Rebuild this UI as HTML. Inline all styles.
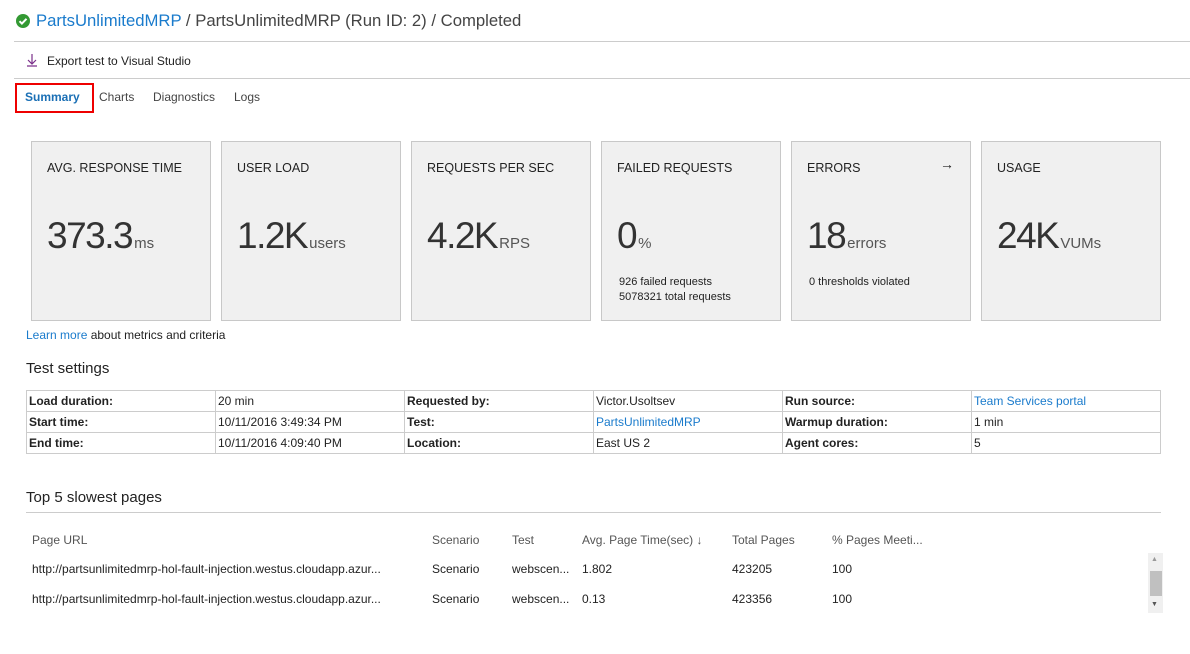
<!DOCTYPE html>
<html><head><meta charset="utf-8"><style>
*{box-sizing:border-box;margin:0;padding:0}
body{width:1190px;height:654px;background:#fff;font-family:"Liberation Sans",sans-serif;color:#222;position:relative;overflow:hidden;font-size:12px}
.a{position:absolute;white-space:nowrap}
.card{position:absolute;top:141px;width:180px;height:180px;background:#f0f0f0;border:1px solid #c8c8c8}
.card .t{position:absolute;left:15px;top:19px;font-size:12.5px;color:#222}
.card .v{position:absolute;left:15px;top:73px;font-size:37px;font-weight:300;color:#333;letter-spacing:-1.5px}
.card .v span{font-size:15px;color:#555;letter-spacing:0;margin-left:2px}
.card .s{position:absolute;left:17px;font-size:11px;color:#222}
table{position:absolute;left:26px;top:390px;width:1135px;border-collapse:collapse;font-size:12px}
td{border:1px solid #ccc;height:21px;padding:0 2px;width:189px}
td.b{font-weight:bold}
.lnk{color:#1a7bcc}
.hdr{color:#555}
</style></head><body>
<svg class="a" style="left:16px;top:14px" width="14" height="14" viewBox="0 0 14 14"><circle cx="7" cy="7" r="7" fill="#339933"/><path d="M3.5 7.2l2.4 2.4 4.6-4.8" stroke="#fff" stroke-width="2" fill="none"/></svg>
<div class="a" style="left:36px;top:11px;font-size:16.7px;color:#444"><span class="lnk">PartsUnlimitedMRP</span> / PartsUnlimitedMRP (Run ID: 2) / Completed</div>
<div class="a" style="left:14px;top:41px;width:1176px;border-top:1px solid #ccc"></div>
<svg class="a" style="left:26px;top:53px" width="12" height="14" viewBox="0 0 12 14"><path d="M6 1v10M2 7l4 4 4-4M1 13h10" stroke="#7a2f8a" stroke-width="1.2" fill="none"/></svg>
<div class="a" style="left:47px;top:54px;font-size:12px">Export test to Visual Studio</div>
<div class="a" style="left:14px;top:78px;width:1176px;border-top:1px solid #ccc"></div>
<div class="a" style="left:15px;top:83px;width:79px;height:30px;border:2px solid #e00"></div>
<div class="a" style="left:25px;top:90px;font-weight:bold;color:#1a6fb5">Summary</div>
<div class="a" style="left:99px;top:90px;color:#444">Charts</div>
<div class="a" style="left:153px;top:90px;color:#444">Diagnostics</div>
<div class="a" style="left:234px;top:90px;color:#444">Logs</div>

<div class="card" style="left:31px"><div class="t">AVG. RESPONSE TIME</div><div class="v">373.3<span>ms</span></div></div>
<div class="card" style="left:221px"><div class="t">USER LOAD</div><div class="v">1.2K<span>users</span></div></div>
<div class="card" style="left:411px"><div class="t">REQUESTS PER SEC</div><div class="v">4.2K<span>RPS</span></div></div>
<div class="card" style="left:601px"><div class="t">FAILED REQUESTS</div><div class="v">0<span>%</span></div><div class="s" style="top:134px">926 failed requests</div><div class="s" style="top:149px">5078321 total requests</div></div>
<div class="card" style="left:791px"><div class="t">ERRORS</div><div class="a" style="left:148px;top:14px;font-size:14px">&#8594;</div><div class="v">18<span>errors</span></div><div class="s" style="top:134px">0 thresholds violated</div></div>
<div class="card" style="left:981px"><div class="t">USAGE</div><div class="v">24K<span>VUMs</span></div></div>

<div class="a" style="left:26px;top:328px;font-size:12px"><span class="lnk">Learn more</span> about metrics and criteria</div>
<div class="a" style="left:26px;top:360px;font-size:15px">Test settings</div>
<table>
<tr><td class="b">Load duration:</td><td>20 min</td><td class="b">Requested by:</td><td>Victor.Usoltsev</td><td class="b">Run source:</td><td class="lnk">Team Services portal</td></tr>
<tr><td class="b">Start time:</td><td>10/11/2016 3:49:34 PM</td><td class="b">Test:</td><td class="lnk">PartsUnlimitedMRP</td><td class="b">Warmup duration:</td><td>1 min</td></tr>
<tr><td class="b">End time:</td><td>10/11/2016 4:09:40 PM</td><td class="b">Location:</td><td>East US 2</td><td class="b">Agent cores:</td><td>5</td></tr>
</table>
<div class="a" style="left:26px;top:489px;font-size:15px">Top 5 slowest pages</div>
<div class="a" style="left:26px;top:512px;width:1135px;border-top:1px solid #ccc"></div>
<div class="a hdr" style="left:32px;top:533px">Page URL</div>
<div class="a hdr" style="left:432px;top:533px">Scenario</div>
<div class="a hdr" style="left:512px;top:533px">Test</div>
<div class="a hdr" style="left:582px;top:533px">Avg. Page Time(sec) &#8595;</div>
<div class="a hdr" style="left:732px;top:533px">Total Pages</div>
<div class="a hdr" style="left:832px;top:533px">% Pages Meeti...</div>
<div class="a" style="left:32px;top:562px">http://partsunlimitedmrp-hol-fault-injection.westus.cloudapp.azur...</div>
<div class="a" style="left:432px;top:562px">Scenario</div><div class="a" style="left:512px;top:562px">webscen...</div><div class="a" style="left:582px;top:562px">1.802</div><div class="a" style="left:732px;top:562px">423205</div><div class="a" style="left:832px;top:562px">100</div>
<div class="a" style="left:32px;top:592px">http://partsunlimitedmrp-hol-fault-injection.westus.cloudapp.azur...</div>
<div class="a" style="left:432px;top:592px">Scenario</div><div class="a" style="left:512px;top:592px">webscen...</div><div class="a" style="left:582px;top:592px">0.13</div><div class="a" style="left:732px;top:592px">423356</div><div class="a" style="left:832px;top:592px">100</div>
<div class="a" style="left:1148px;top:553px;width:15px;height:60px;background:#f0f0f0"></div>
<div class="a" style="left:1150px;top:571px;width:12px;height:25px;background:#c0c0c0"></div>
<div class="a" style="left:1151px;top:556px;font-size:7px;color:#999">&#9650;</div>
<div class="a" style="left:1151px;top:601px;font-size:7px;color:#555">&#9660;</div>
</body></html>
